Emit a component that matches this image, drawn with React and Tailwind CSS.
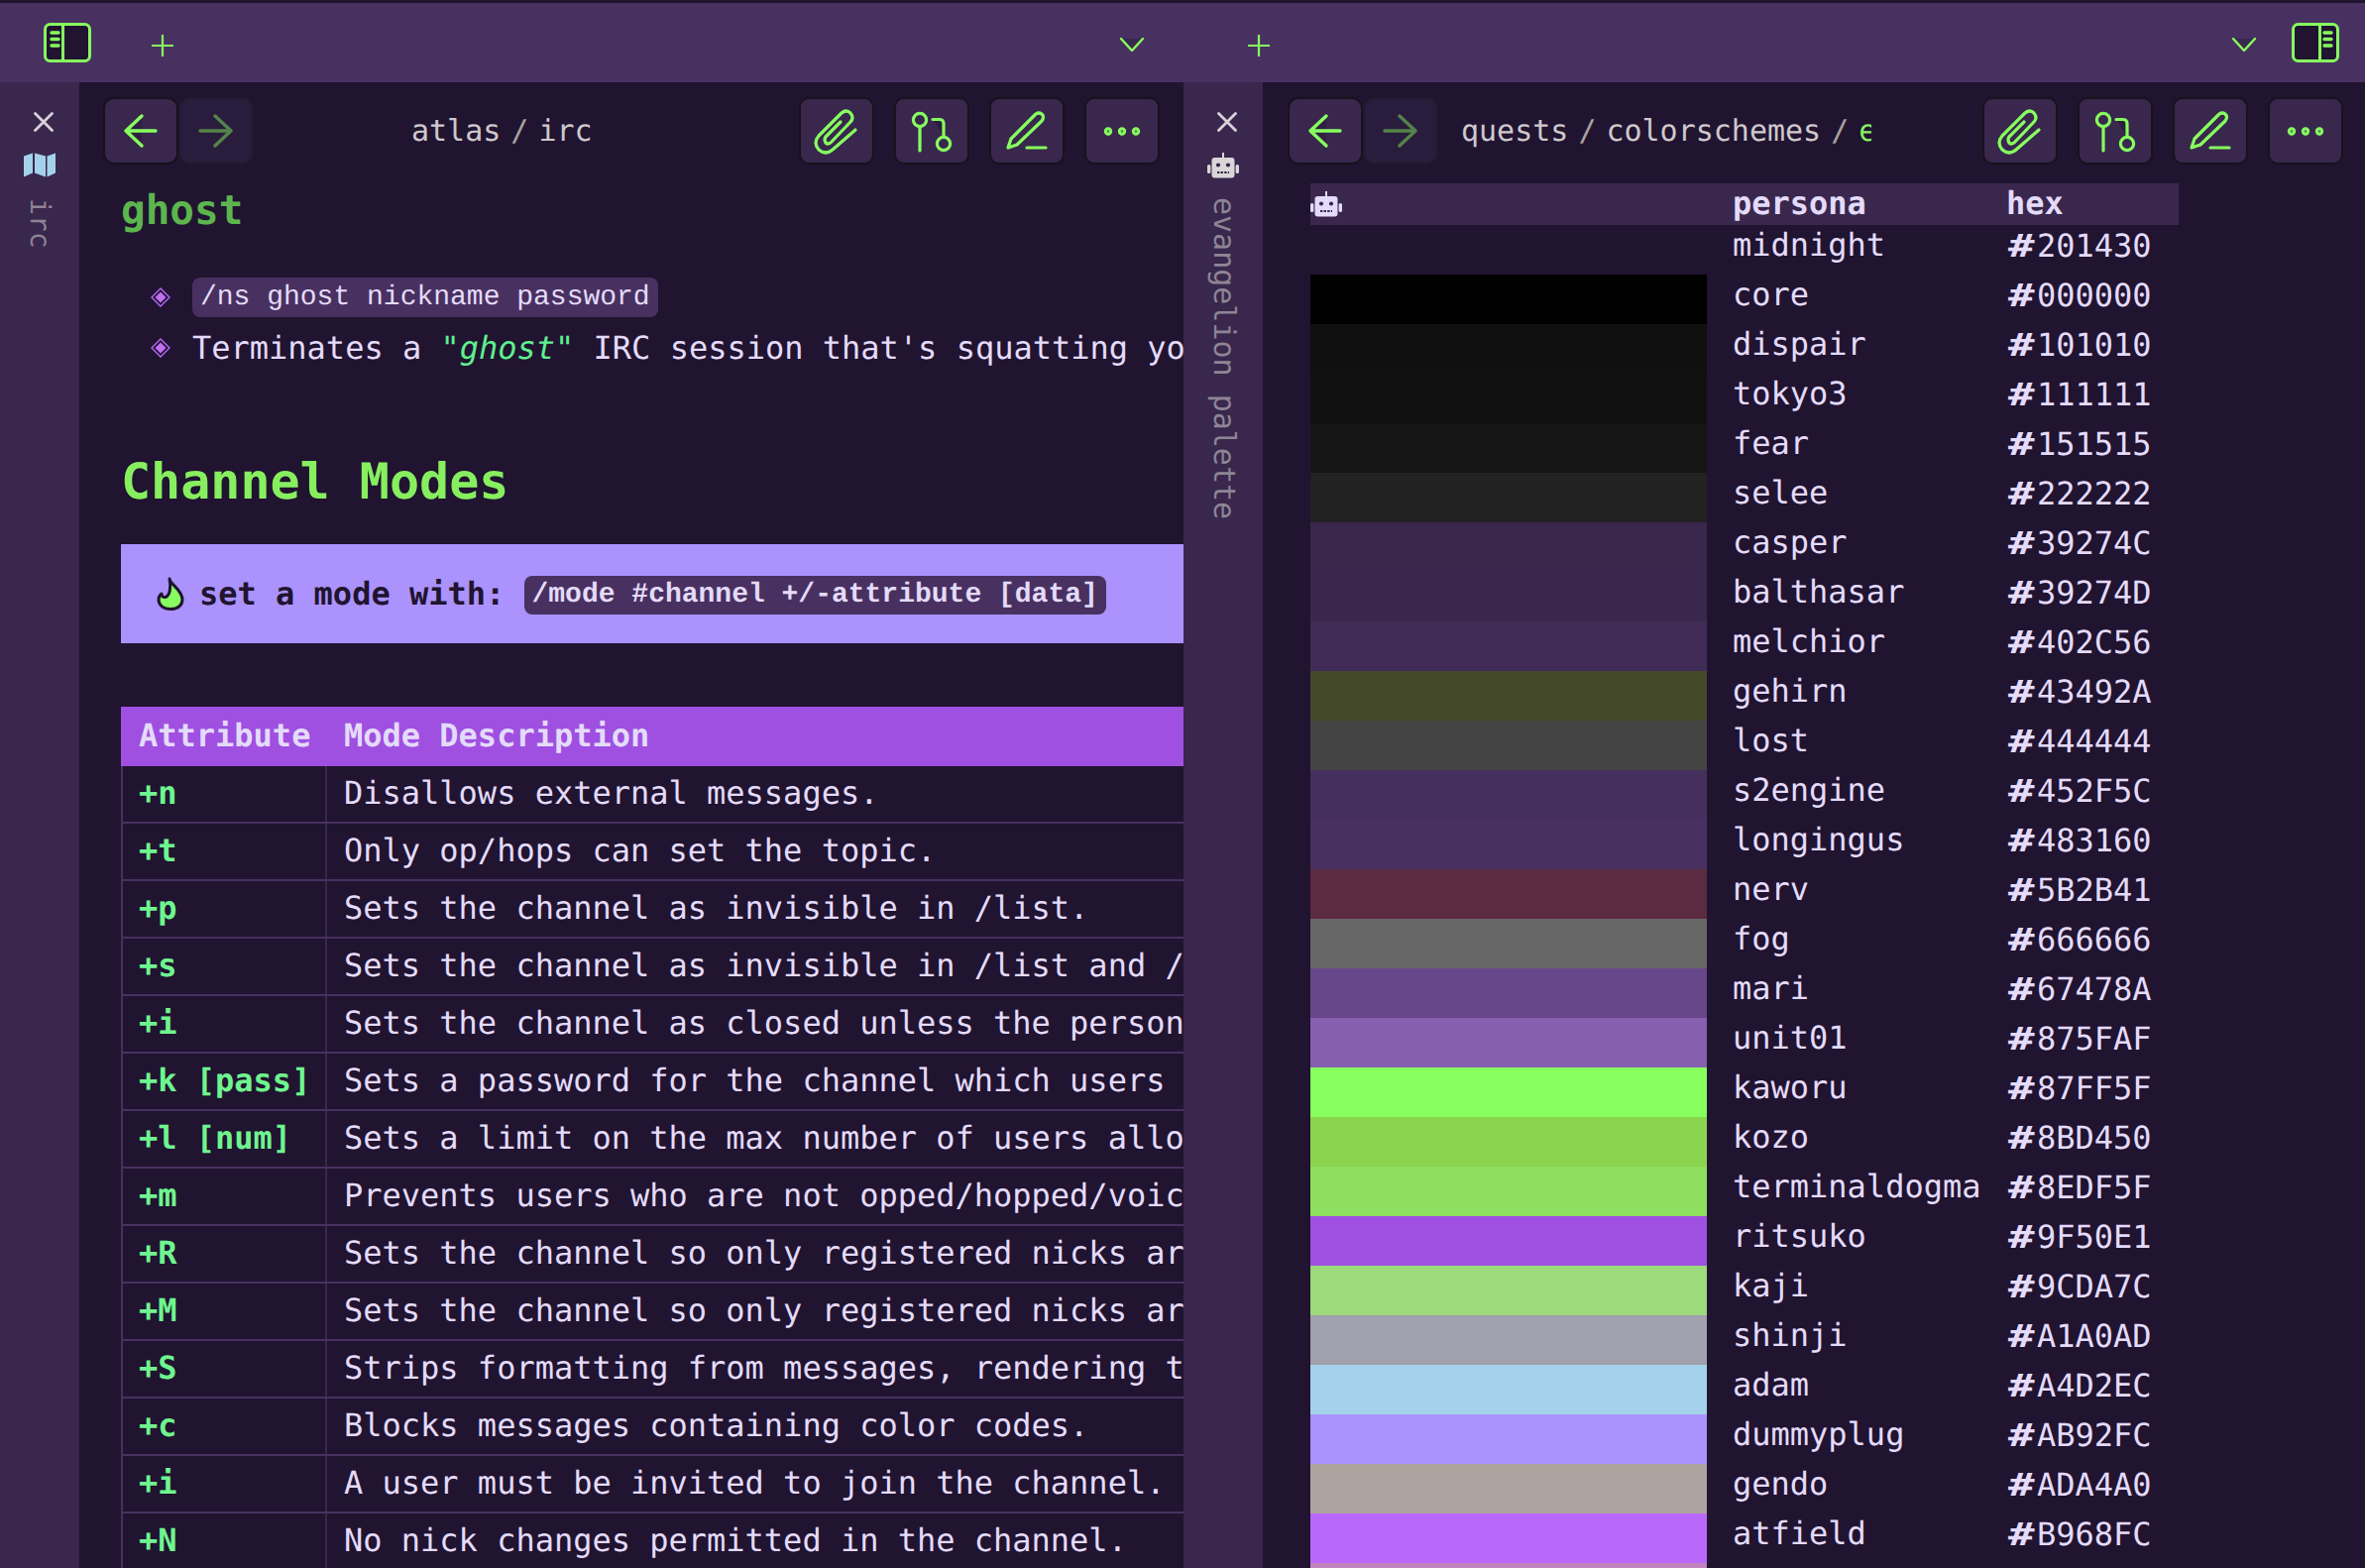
import React from 'react';

const GREEN = '#87FF5F';

const modes = [
    ['+n', 'Disallows external messages.'],
    ['+t', 'Only op/hops can set the topic.'],
    ['+p', 'Sets the channel as invisible in /list.'],
    ['+s', 'Sets the channel as invisible in /list and /whois.'],
    ['+i', 'Sets the channel as closed unless the person was invited.'],
    ['+k [pass]', 'Sets a password for the channel which users must enter.'],
    ['+l [num]', 'Sets a limit on the max number of users allowed in the channel.'],
    ['+m', 'Prevents users who are not opped/hopped/voiced from talking.'],
    ['+R', 'Sets the channel so only registered nicks are allowed in.'],
    ['+M', 'Sets the channel so only registered nicks are allowed to talk.'],
    ['+S', 'Strips formatting from messages, rendering them as plain text.'],
    ['+c', 'Blocks messages containing color codes.'],
    ['+i', 'A user must be invited to join the channel.'],
    ['+N', 'No nick changes permitted in the channel.'],
];

const palette = [
    ['midnight', '201430'], ['core', '000000'], ['dispair', '101010'], ['tokyo3', '111111'],
    ['fear', '151515'], ['selee', '222222'], ['casper', '39274C'], ['balthasar', '39274D'],
    ['melchior', '402C56'], ['gehirn', '43492A'], ['lost', '444444'], ['s2engine', '452F5C'],
    ['longingus', '483160'], ['nerv', '5B2B41'], ['fog', '666666'], ['mari', '67478A'],
    ['unit01', '875FAF'], ['kaworu', '87FF5F'], ['kozo', '8BD450'], ['terminaldogma', '8EDF5F'],
    ['ritsuko', '9F50E1'], ['kaji', '9CDA7C'], ['shinji', 'A1A0AD'], ['adam', 'A4D2EC'],
    ['dummyplug', 'AB92FC'], ['gendo', 'ADA4A0'], ['atfield', 'B968FC'], ['', 'C183BC'],
];

function ToggleIcon({ flip }) {
    return (
        <svg width="48" height="40" viewBox="0 0 48 40" className={flip ? '-scale-x-100' : ''}>
            <rect x="1.5" y="1.5" width="45" height="37" rx="5" fill="#201430" stroke={GREEN} strokeWidth="3" />
            <path d="M19.5 2v36" stroke={GREEN} strokeWidth="3" />
            <path d="M8 10h7M8 16.5h7M8 23h7" stroke={GREEN} strokeWidth="3.4" strokeLinecap="round" />
        </svg>
    );
}

function PlusIcon() {
    return (
        <svg width="22" height="22" viewBox="0 0 22 22">
            <path d="M0 11h22M11 0v22" stroke={GREEN} strokeWidth="2.2" />
        </svg>
    );
}

function ChevronIcon() {
    return (
        <svg width="24" height="14" viewBox="0 0 24 14">
            <path d="M1 1l11 12L23 1" fill="#39274D" stroke={GREEN} strokeWidth="2.4" strokeLinecap="round" strokeLinejoin="round" />
        </svg>
    );
}

function CloseIcon() {
    return (
        <svg width="20" height="20" viewBox="0 0 20 20" className="ml-2 shrink-0">
            <path d="M1.5 1.5l17 17M18.5 1.5l-17 17" stroke="#D9D2DA" strokeWidth="2.8" strokeLinecap="round" />
        </svg>
    );
}

function MapIcon() {
    return (
        <svg width="32" height="25" viewBox="0 0 32 25" className="shrink-0" fill="#A4D2EC">
            <path d="M0 3.5L9 0.5v20L0 24.5z" />
            <path d="M11 0.5l11 3v21l-11-4z" />
            <path d="M23.5 3.5L32 0.5v20l-8.5 4z" />
        </svg>
    );
}

function RobotIcon({ color }) {
    return (
        <svg width="32" height="26" viewBox="0 0 32 26" className="shrink-0">
            <rect x="15" y="0" width="2" height="6" fill={color} />
            <rect x="4.5" y="5" width="23" height="20.5" rx="3" fill={color} />
            <rect x="0" y="12" width="3.4" height="9" rx="1.6" fill={color} />
            <rect x="28.6" y="12" width="3.4" height="9" rx="1.6" fill={color} />
            <circle cx="11" cy="12.5" r="2.1" fill="#39274D" />
            <circle cx="21" cy="12.5" r="2.1" fill="#39274D" />
            <path d="M10 20h12" stroke="#39274D" strokeWidth="2" strokeDasharray="2.4 1.2" />
        </svg>
    );
}

function BackIcon() {
    return (
        <svg width="76" height="68" viewBox="0 0 76 68">
            <path d="M39 19L23 34l16 15z" fill="#2F2042" />
            <path d="M53 34H23M39 19L23 34l16 15" fill="none" stroke={GREEN} strokeWidth="3.4" strokeLinecap="round" strokeLinejoin="round" />
        </svg>
    );
}

function ForwardIcon() {
    return (
        <svg width="76" height="68" viewBox="0 0 76 68" className="opacity-45">
            <path d="M22 34h31M37 19l16 15-16 15" fill="none" stroke={GREEN} strokeWidth="3.4" strokeLinecap="round" strokeLinejoin="round" />
        </svg>
    );
}

function ClipIcon() {
    return (
        <svg width="74" height="67" viewBox="0 0 74 67" fill="none" stroke={GREEN} strokeWidth="3.2" strokeLinecap="round" strokeLinejoin="round">
            <path d="M56 32L33 52Q26 58 19 52Q13 45 19 38L42 15Q47 11 51 15Q55 20 51 24L31 45Q28 47 26 45Q24 42 26 39L41 24" />
        </svg>
    );
}

function BranchIcon() {
    return (
        <svg width="74" height="67" viewBox="0 0 74 67" fill="none" stroke={GREEN} strokeWidth="3.2" strokeLinecap="round">
            <path d="M39 22L49 39V26Q49 22 45 22z" fill="#2A1C3C" stroke="none" />
            <circle cx="25" cy="22" r="6.6" />
            <path d="M25 29v24" />
            <path d="M38 21.5h7q4 0 4 4.5v13" />
            <circle cx="49" cy="46" r="6.6" />
        </svg>
    );
}

function PenIcon() {
    return (
        <svg width="74" height="67" viewBox="0 0 74 67" fill="none" stroke={GREEN} strokeWidth="3.2" strokeLinecap="round" strokeLinejoin="round">
            <path d="M18 50l3-9L46 16q3-2 6 0q3 3 0 7L27 47z" />
            <path d="M37 50h19" />
        </svg>
    );
}

function MoreIcon() {
    return (
        <svg width="74" height="67" viewBox="0 0 74 67" fill="#5E8F58" stroke={GREEN} strokeWidth="2.8">
            <circle cx="23" cy="33.5" r="2.8" />
            <circle cx="37" cy="33.5" r="2.8" />
            <circle cx="51" cy="33.5" r="2.8" />
        </svg>
    );
}

function FlameIcon() {
    return (
        <svg width="28" height="34" viewBox="0 0 28 34" className="shrink-0">
            <path d="M13 2C14 8 26 13 26 23C26 29 21 32.5 14 32.5C7 32.5 2 28.5 2 23C2 20 3 18.5 5 17C5 19.5 6.5 21 9 20.5C13 19 15 11 13 2z" fill={GREEN} stroke="#201430" strokeWidth="3" strokeLinejoin="round" />
        </svg>
    );
}

function Bullet() {
    return (
        <svg width="20" height="20" viewBox="0 0 20 20" className="shrink-0">
            <path d="M10 1L19 10 10 19 1 10z" fill="none" stroke="#B968FC" strokeWidth="1.4" />
            <path d="M10 4.5l5.5 5.5-5.5 5.5L4.5 10z" fill="#C070F0" />
        </svg>
    );
}

function NavButton({ children, dim }) {
    return (
        <div className={`w-[76px] h-[68px] shrink-0 rounded-[11px] border-2 ${dim ? 'bg-[#2A1C3C] border-[#231830]' : 'bg-[#39274D] border-[#17131C]'} flex items-center justify-center [&>svg]:-m-[2px] [&>svg]:shrink-0`}>
            {children}
        </div>
    );
}

function ActionButton({ children }) {
    return (
        <div className="w-[76px] h-[68px] shrink-0 rounded-[10px] border-2 border-[#17131C] bg-[#39274D] flex items-center justify-center [&>svg]:-m-[2px] [&>svg]:shrink-0">
            {children}
        </div>
    );
}

function Actions() {
    return (
        <div className="ml-auto flex gap-[20px]">
            <ActionButton><ClipIcon /></ActionButton>
            <ActionButton><BranchIcon /></ActionButton>
            <ActionButton><PenIcon /></ActionButton>
            <ActionButton><MoreIcon /></ActionButton>
        </div>
    );
}

function Arrows() {
    return (
        <div className="flex">
            <NavButton><BackIcon /></NavButton>
            <NavButton dim><ForwardIcon /></NavButton>
        </div>
    );
}

function Sidebar({ icon, label, labelClass }) {
    return (
        <div className="w-[80px] shrink-0 bg-[#39274D] flex flex-col items-center pt-[30px]">
            <CloseIcon />
            <div className="mt-[21px]">{icon}</div>
            <div className={`[writing-mode:vertical-rl] whitespace-nowrap ${labelClass}`}>{label}</div>
        </div>
    );
}

function LeftPanel() {
    return (
        <div className="w-[1114px] shrink-0 overflow-hidden">
            <div className="flex items-start pt-[15px] pl-[24px] pr-[24px]">
                <Arrows />
                <div className="ml-[159px] h-[68px] flex items-center gap-[10px] text-[30px] text-[#CFC8CC]">
                    <span>atlas</span>
                    <span className="text-[#A9A19E]">/</span>
                    <span>irc</span>
                </div>
                <Actions />
            </div>
            <div className="pl-[42px] w-[1300px] text-[32px] text-[#E4DBFA]">
                <h1 className="mt-[23px] h-[48px] leading-[46px] text-[41px] font-bold text-[#5DB54F]">ghost</h1>
                <ul className="mt-[37px]">
                    <li className="h-[51px] flex items-center">
                        <span className="w-[72px] flex justify-end pr-[22px] shrink-0"><Bullet /></span>
                        <code className="h-[40px] leading-[42px] px-[8px] rounded-[8px] bg-[#483160] text-[28px]">/ns ghost nickname password</code>
                    </li>
                    <li className="h-[51px] flex items-center whitespace-pre">
                        <span className="w-[72px] flex justify-end pr-[22px] shrink-0"><Bullet /></span>
                        <span>Terminates a <span className="text-[#5FF08F]">"<em>ghost</em>"</span> IRC session that's squatting your nickname.</span>
                    </li>
                </ul>
                <h2 className="mt-[78px] h-[64px] leading-[64px] text-[50px] font-bold text-[#87EF5F]">Channel Modes</h2>
                <div className="mt-[31px] h-[100px] bg-[#AB92FC] flex items-center pl-[36px] whitespace-pre font-bold text-[#201430]">
                    <FlameIcon />
                    <span className="ml-[15px]">set a mode with: </span>
                    <code className="mt-[2px] h-[39px] leading-[40px] px-[8px] rounded-[8px] bg-[#483160] text-[28px] text-[#E4DBFA]">/mode #channel +/-attribute [data]</code>
                </div>
                <div className="mt-[64px]">
                    <div className="h-[60px] bg-[#9F50E1] flex items-center pb-[2px] font-bold">
                        <span className="w-[207px] pl-[18px] shrink-0">Attribute</span>
                        <span className="pl-[18px]">Mode Description</span>
                    </div>
                    {modes.map(([attr, text], i) => (
                        <div key={i} className="h-[58px] flex border-l-2 border-b-2 border-[#483160] whitespace-pre">
                            <span className="w-[206px] shrink-0 pl-[16px] leading-[54px] font-bold text-[#6FF58F] border-r-2 border-[#39274D]">{attr}</span>
                            <span className="pl-[17px] leading-[54px]">
                                {text}
                                {attr === '+N' && <span className="inline-block ml-[57px] w-[2px] h-[2px] bg-[#B968FC]"></span>}
                            </span>
                        </div>
                    ))}
                </div>
            </div>
        </div>
    );
}

function RightPanel() {
    return (
        <div className="flex-1 min-w-0 overflow-hidden">
            <div className="flex items-start pt-[15px] pl-[25px] pr-[22px]">
                <Arrows />
                <div className="ml-[23px] w-[414px] h-[68px] overflow-hidden flex items-center gap-[10px] text-[30px] text-[#CFC8CC] whitespace-nowrap">
                    <span>quests</span>
                    <span className="text-[#A9A19E]">/</span>
                    <span>colorschemes</span>
                    <span className="text-[#A9A19E]">/</span>
                    <span className="text-[#87EF5F]">evangelion palette</span>
                </div>
                <Actions />
            </div>
            <div className="mt-[19px] ml-[48px] w-[876px] text-[32px] text-[#E4DBFA]">
                <div className="h-[42px] bg-[#39274D] flex items-center font-bold">
                    <span className="w-[426px] shrink-0"><RobotIcon color="#E4DBFA" /></span>
                    <span className="w-[276px] shrink-0 leading-[34px] -mt-[2px]">persona</span>
                    <span className="leading-[34px] -mt-[2px]">hex</span>
                </div>
                {palette.map(([name, hex]) => (
                    <div key={hex} className="h-[50px] flex">
                        <span className="w-[400px] shrink-0" style={{ backgroundColor: `#${hex}` }}></span>
                        <span className="w-[26px] shrink-0"></span>
                        <span className="w-[277px] shrink-0 leading-[40px]">{name}</span>
                        {name && (
                            <span className="leading-[42px] whitespace-pre">
                                <span className="inline-block w-[30px] origin-left translate-x-[1px] scale-x-[1.38] font-bold">#</span>
                                {hex}
                            </span>
                        )}
                    </div>
                ))}
            </div>
        </div>
    );
}

export default function App() {
    return (
        <div className="w-[2386px] h-[1582px] overflow-hidden bg-[#201430] pt-[3px] flex flex-col font-['DejaVu_Sans_Mono',monospace] [text-rendering:geometricPrecision]">
            <div className="h-[80px] shrink-0 bg-[#483160] flex">
                <div className="w-[1194px] shrink-0 pl-[44px] pr-[40px] pt-[20px] flex items-start">
                    <ToggleIcon />
                    <div className="ml-[61px] mt-[12px]"><PlusIcon /></div>
                    <div className="ml-auto mt-[15px]"><ChevronIcon /></div>
                </div>
                <div className="flex-1 pl-[65px] pr-[26px] pt-[20px] flex items-start">
                    <div className="mt-[12px]"><PlusIcon /></div>
                    <div className="ml-auto mt-[15px]"><ChevronIcon /></div>
                    <div className="ml-[36px]"><ToggleIcon flip /></div>
                </div>
            </div>
            <div className="flex-1 min-h-0 flex">
                <Sidebar icon={<MapIcon />} label="irc" labelClass="mt-[21px] text-[28px] text-[#8D8595]" />
                <LeftPanel />
                <Sidebar icon={<RobotIcon color="#DAD6D8" />} label="evangelion palette" labelClass="mt-[19px] text-[30px] text-[#8D8595]" />
                <RightPanel />
            </div>
        </div>
    );
}
